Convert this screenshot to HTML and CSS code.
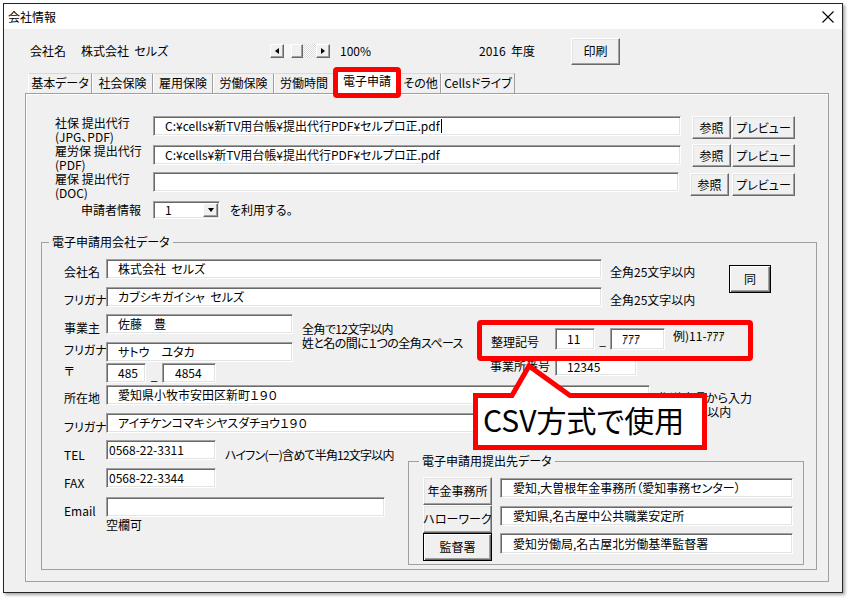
FILE: index.html
```html
<!DOCTYPE html>
<html lang="ja">
<head>
<meta charset="utf-8">
<title>会社情報</title>
<link rel="stylesheet" href="styles.css">
</head>
<body>
<div class="window">
  <div class="titlebar">
    <span class="title">会社情報</span>
    <svg class="close" width="12" height="12" viewBox="0 0 12 12"><path d="M0.5 0.5L11.5 11.5M11.5 0.5L0.5 11.5" stroke="#000" stroke-width="1.1" fill="none"/></svg>
  </div>
  <div class="content">
    <div class="hdr">
      <span class="h-lbl">会社名</span>
      <span class="h-name">株式会社  セルズ</span>
      <div class="sb">
        <div class="sb-btn"><span class="tri-l"></span></div>
        <div class="sb-gap"></div>
        <div class="sb-thumb"></div>
        <div class="sb-dots"></div>
        <div class="sb-btn"><span class="tri-r"></span></div>
      </div>
      <span class="pct">100%</span>
      <span class="year">2016  年度</span>
      <button class="btn print">印刷</button>
    </div>
    <div class="tabs">
      <div class="tab">基本データ</div>
      <div class="tab">社会保険</div>
      <div class="tab">雇用保険</div>
      <div class="tab">労働保険</div>
      <div class="tab">労働時間</div>
      <div class="tab sel">電子申請</div>
      <div class="tab">その他</div>
      <div class="tab">Cellsドライブ</div>
    </div>
    <div class="panel">
      <div class="files">
        <div class="frow">
          <div class="flbl">社保 提出代行<br>(JPG、PDF)</div>
          <div class="tb path">C:¥cells¥新TV用台帳¥提出代行PDF¥セルプロ正.pdf<span class="caret"></span></div>
          <button class="btn ref">参照</button>
          <button class="btn prev">プレビュー</button>
        </div>
        <div class="frow">
          <div class="flbl">雇労保 提出代行<br>(PDF)</div>
          <div class="tb path w2">C:¥cells¥新TV用台帳¥提出代行PDF¥セルプロ正.pdf</div>
          <button class="btn ref">参照</button>
          <button class="btn prev">プレビュー</button>
        </div>
        <div class="frow r3">
          <div class="flbl">雇保 提出代行<br>(DOC)</div>
          <div class="tb path w3"></div>
          <button class="btn ref">参照</button>
          <button class="btn prev p3">プレビュー</button>
        </div>
        <div class="frow">
          <div class="apl-lbl">申請者情報</div>
          <div class="tb combo"><span>1</span><span class="dd"><span class="tri-d"></span></span></div>
          <div class="use">を利用する。</div>
        </div>
      </div>

      <fieldset class="grp1">
        <legend>電子申請用会社データ</legend>
        <div class="g-row">
          <div class="g-lbl">会社名</div>
          <div class="tb wide">株式会社  セルズ</div>
          <div class="note n25">全角25文字以内</div>
          <button class="btn def same">同</button>
        </div>
        <div class="g-row mt8">
          <div class="g-lbl">フリガナ</div>
          <div class="tb wide">カブシキガイシャ  セルズ</div>
          <div class="note n25">全角25文字以内</div>
        </div>

        <div class="blk mt7">
          <div class="colA">
            <div class="g-row">
              <div class="g-lbl l6">事業主</div>
              <div class="tb n187">佐藤　豊</div>
            </div>
            <div class="g-row mt8">
              <div class="g-lbl up">フリガナ</div>
              <div class="tb n187">サトウ　ユタカ</div>
            </div>
            <div class="g-row mt1">
              <div class="g-lbl up">〒</div>
              <div class="tb zip1">485</div>
              <span class="us">_</span>
              <div class="tb zip2">4854</div>
            </div>
          </div>
          <div class="note2">全角で12文字以内<br>姓と名の間に１つの全角スペース</div>
          <div class="colZ">
            <div class="z-row">
              <div class="z-lbl">整理記号</div>
              <div class="tb z1">11</div>
              <span class="us2">_</span>
              <div class="tb z2">ｱｱｱ</div>
              <div class="z-ex">例)11-ｱｱｱ</div>
            </div>
            <div class="z-row mt8">
              <div class="z-lbl z-lbl2">事業所番号</div>
              <div class="tb z3">12345</div>
            </div>
          </div>
        </div>

        <div class="g-row mt2">
          <div class="g-lbl">所在地</div>
          <div class="tb addr">愛知県小牧市安田区新町１９０</div>
          <div class="note2b">都道府県から入力<br>全角20字以内</div>
        </div>
        <div class="g-row mt8">
          <div class="g-lbl l6">フリガナ</div>
          <div class="tb addr">アイチケンコマキシヤスダチョウ１９０</div>
        </div>

        <div class="blk mt7">
          <div class="colB">
            <div class="g-row">
              <div class="g-lbl l7">TEL</div>
              <div class="tb tel">0568-22-3311</div>
              <div class="note ntel">ハイフン(ー)含めて半角12文字以内</div>
            </div>
            <div class="g-row mt8">
              <div class="g-lbl l7">FAX</div>
              <div class="tb tel">0568-22-3344</div>
            </div>
            <div class="g-row mt9">
              <div class="g-lbl l6">Email</div>
              <div class="tb email"></div>
            </div>
            <div class="empty-ok">空欄可</div>
          </div>
          <fieldset class="grp2">
            <legend>電子申請用提出先データ</legend>
            <div class="s-row">
              <button class="btn sbtn">年金事務所</button>
              <div class="tb sin">愛知,大曽根年金事務所（愛知事務センター）</div>
            </div>
            <div class="s-row">
              <button class="btn sbtn">ハローワーク</button>
              <div class="tb sin">愛知県,名古屋中公共職業安定所</div>
            </div>
            <div class="s-row">
              <button class="btn def sbtn">監督署</button>
              <div class="tb sin s3">愛知労働局,名古屋北労働基準監督署</div>
            </div>
          </fieldset>
        </div>
      </fieldset>
    </div>
  </div>
</div>

<div class="mark-tab"></div>
<div class="mark-zr"></div>
<svg class="callout-shape" width="240" height="96" viewBox="0 0 240 96">
  <path d="M5.5 37.5 H42 L59 8 L100 37.5 H234.5 V89.5 H5.5 Z" fill="#fff" stroke="#ff0000" stroke-width="5" stroke-linejoin="miter" stroke-miterlimit="10"/>
</svg>
<div class="callout-text">CSV方式で使用</div>
</body>
</html>
```

FILE: styles.css
```css
* { box-sizing: border-box; }
html, body { margin: 0; padding: 0; }
body {
  position: relative;
  width: 848px;
  height: 599px;
  overflow: hidden;
  background: #fff;
  padding: 3px 0 0 3px;
  font-family: "Noto Sans CJK JP", "Noto Sans", sans-serif;
  font-size: 12px;
  line-height: 16px;
  color: #000;
  font-feature-settings: "palt";
}
.window {
  width: 840px;
  height: 590px;
  border: 1px solid #262626;
  box-shadow: 2px 2px 3px rgba(0, 0, 0, .35);
  background: #f0f0f0;
  display: flex;
  flex-direction: column;
}
.titlebar {
  flex: none;
  height: 25px;
  background: #fff;
  display: flex;
  align-items: center;
  justify-content: space-between;
  padding: 0 8px 0 4px;
}
.close { display: block; }
.content { flex: 1; display: flex; flex-direction: column; }

/* header */
.hdr { flex: none; display: flex; align-items: center; height: 28px; margin-top: 8px; }
.h-lbl { margin-left: 26px; width: 51px; }
.h-name { width: 189px; white-space: pre; }
.sb { display: flex; align-items: center; width: 70px; height: 14px; }
.sb-btn {
  width: 14px; height: 14px; flex: none;
  border: 1px solid; border-color: #fff #696969 #696969 #fff;
  box-shadow: inset -1px -1px 0 #a0a0a0;
  background: #f0f0f0;
  display: flex; align-items: center; justify-content: center;
}
.sb-gap { width: 7px; height: 14px; background: #f6f6f6; }
.sb-thumb {
  width: 12px; height: 14px; background: #f0f0f0;
  border: 1px solid; border-color: #fff #696969 #696969 #fff;
  box-shadow: inset -1px -1px 0 #a0a0a0;
}
.sb-dots {
  width: 13px; height: 14px;
  background-image: repeating-conic-gradient(#d8d8d8 0 25%, #fff 0 50%);
  background-size: 2px 2px;
}
.tri-l { width: 0; height: 0; border-top: 3.5px solid transparent; border-bottom: 3.5px solid transparent; border-right: 4px solid #000; }
.tri-r { width: 0; height: 0; border-top: 3.5px solid transparent; border-bottom: 3.5px solid transparent; border-left: 4px solid #000; }
.tri-d { width: 0; height: 0; border-left: 3.5px solid transparent; border-right: 3.5px solid transparent; border-top: 4px solid #000; }
.pct { width: 139px; }
.year { width: 92px; white-space: pre; }

/* buttons */
.btn {
  font: inherit;
  font-feature-settings: "palt";
  color: #000;
  background: #f0f0f0;
  border: 1px solid;
  border-color: #fff #696969 #696969 #fff;
  box-shadow: inset -1px -1px 0 #a0a0a0, inset 1px 1px 0 #e3e3e3;
  padding: 0;
  margin: 0;
  display: flex;
  align-items: center;
  justify-content: center;
  flex: none;
  line-height: 16px;
  white-space: nowrap;
}
.btn.def {
  border-color: #000;
  box-shadow: inset 1px 1px 0 #fff, inset -1px -1px 0 #696969, inset -2px -2px 0 #a0a0a0;
}
.print { width: 49px; height: 27px; }

/* tabs */
.tabs {
  flex: none; display: flex; align-items: flex-end;
  height: 24px; margin: 4px 0 0 24px;
  position: relative; z-index: 1;
}
.tab {
  flex: none; height: 20px; text-align: center; white-space: nowrap;
  border-top: 1px solid #d8d8d8; border-left: 1px solid #fff; border-right: 1px solid #a0a0a0;
  line-height: 18px;
}
.tab:nth-child(1) { width: 64px; }
.tab:nth-child(2) { width: 61px; }
.tab:nth-child(3) { width: 60px; }
.tab:nth-child(4) { width: 61px; }
.tab:nth-child(5) { width: 60px; }
.tab:nth-child(6) { width: 66px; }
.tab:nth-child(7) { width: 41px; }
.tab:nth-child(8) { width: 74px; }
.tab.sel { height: 24px; margin-bottom: -1px; background: #fff; line-height: 20px; }

/* panel */
.panel {
  flex: none;
  margin-left: 21px;
  width: 804px;
  height: 489px;
  border: 1px solid #a0a0a0;
  box-shadow: inset 1px 1px 0 #fff;
  padding: 22px 0 0 15px;
}
.files { margin-left: 14px; }
.frow { display: flex; align-items: flex-start; height: 28px; }
.flbl { width: 98px; flex: none; line-height: 14px; white-space: nowrap; }
.tb {
  background: #fff;
  border: 1px solid;
  border-color: #a0a0a0 #fff #fff #a0a0a0;
  box-shadow: inset 1px 1px 0 #696969, inset -1px -1px 0 #e3e3e3;
  padding-left: 11px;
  display: flex;
  align-items: center;
  white-space: pre;
  overflow: hidden;
  flex: none;
  height: 20px;
}
.path { width: 528px; }
.path.w2 { margin-top: 1px; }
.path.w3 { width: 526px; }
.ref { width: 39px; height: 23px; margin-left: 11px; }
.prev { width: 63px; height: 23px; margin-left: 1px; }
.prev.p3 { margin-left: 3px; }
.frow.r3 .btn { margin-top: 1px; }
.caret { display: inline-block; width: 1px; height: 14px; background: #000; margin-left: 1px; }
.apl-lbl { width: 98px; flex: none; text-align: right; padding-right: 12px; margin-top: 2px; }
.combo { width: 67px; height: 18px; margin-top: 1px; justify-content: space-between; padding-right: 1px; }
.dd {
  width: 15px; height: 14px;
  border: 1px solid; border-color: #fff #696969 #696969 #fff;
  box-shadow: inset -1px -1px 0 #a0a0a0;
  background: #f0f0f0;
  display: flex; align-items: center; justify-content: center;
}
.use { margin-left: 10px; margin-top: 2px; }

/* group boxes */
fieldset { margin: 0; min-width: 0; }
legend { padding: 0 3px; line-height: 16px; }
.grp1 {
  margin-top: 6px;
  width: 776px;
  height: 336px;
  border: 1px solid #a0a0a0;
  padding: 9px 0 0 22px;
}
.grp1 > legend { margin-left: -15px; }
.g-row { display: flex; align-items: flex-start; height: 20px; }
.g-lbl { width: 42px; flex: none; margin-top: 5px; white-space: nowrap; }
.g-lbl.up { margin-top: 0; }
.g-lbl.l6 { margin-top: 6px; }
.g-lbl.l7 { margin-top: 7px; }
.mt1 { margin-top: 1px; }
.mt2 { margin-top: 2px; }
.mt7 { margin-top: 7px; }
.mt8 { margin-top: 8px; }
.mt9 { margin-top: 9px; }
.wide { width: 496px; }
.note { margin-left: 8px; margin-top: 5px; white-space: nowrap; flex: none; }
.n25 { width: 119px; }
.same { width: 42px; height: 28px; margin-top: 6px; }

.blk { display: flex; align-items: flex-start; }
.colA { width: 238px; flex: none; }
.n187 { width: 187px; }
.zip1 { width: 40px; }
.zip2 { width: 54px; padding-left: 12px; }
.us { width: 16px; text-align: center; margin-top: 4px; flex: none; }
.note2 { width: 189px; flex: none; margin-top: 8px; line-height: 14px; white-space: nowrap; letter-spacing: -0.6px; }
.colZ { flex: none; margin-top: 14px; }
.z-row { display: flex; align-items: flex-start; height: 22px; }
.z-row.mt8 { height: 18px; }
.z-lbl { width: 64px; flex: none; margin-top: 6px; white-space: nowrap; }
.z-lbl2 { margin-top: 0; margin-left: -1px; width: 65px; }
.z1 { width: 40px; height: 22px; }
.us2 { width: 15px; text-align: center; margin-top: 4px; flex: none; }
.z2 { width: 55px; height: 22px; }
.z-ex { margin-left: 8px; white-space: nowrap; }
.z3 { width: 82px; height: 18px; }

.addr { width: 544px; }
.note2b { margin-left: 8px; margin-top: 6px; line-height: 14px; white-space: nowrap; }

.colB { width: 344px; flex: none; }
.tel { width: 110px; padding-left: 2px; }
.ntel { margin-left: 9px; margin-top: 7px; letter-spacing: -0.8px; }
.email { width: 279px; }
.empty-ok { margin-left: 42px; }

.grp2 {
  margin-top: 13px;
  width: 396px;
  height: 112px;
  border: 1px solid #a0a0a0;
  padding: 8px 0 0 14px;
  flex: none;
}
.grp2 > legend { margin-left: -4px; }
.s-row { display: flex; align-items: flex-start; height: 28px; }
.sbtn { width: 69px; height: 28px; }
.sin { width: 293px; margin-left: 8px; margin-top: 1px; padding-left: 12px; }
.sin.s3 { margin-top: 0; height: 21px; }

/* annotations laid over the dialog */
.mark-tab {
  position: absolute; left: 333px; top: 67px;
  width: 68px; height: 31px;
  border: 5px solid #ff0000; border-radius: 4px;
  z-index: 2;
}
.mark-zr {
  position: absolute; left: 477px; top: 320px;
  width: 276px; height: 41px;
  border: 5px solid #ff0000; border-radius: 4px;
}
.callout-shape { position: absolute; left: 470px; top: 358px; display: block; }
.callout-text {
  position: absolute; left: 473px; top: 393px;
  width: 234px; height: 57px;
  padding-left: 10px;
  font-size: 30px;
  line-height: 52px;
  white-space: nowrap;
}
```
